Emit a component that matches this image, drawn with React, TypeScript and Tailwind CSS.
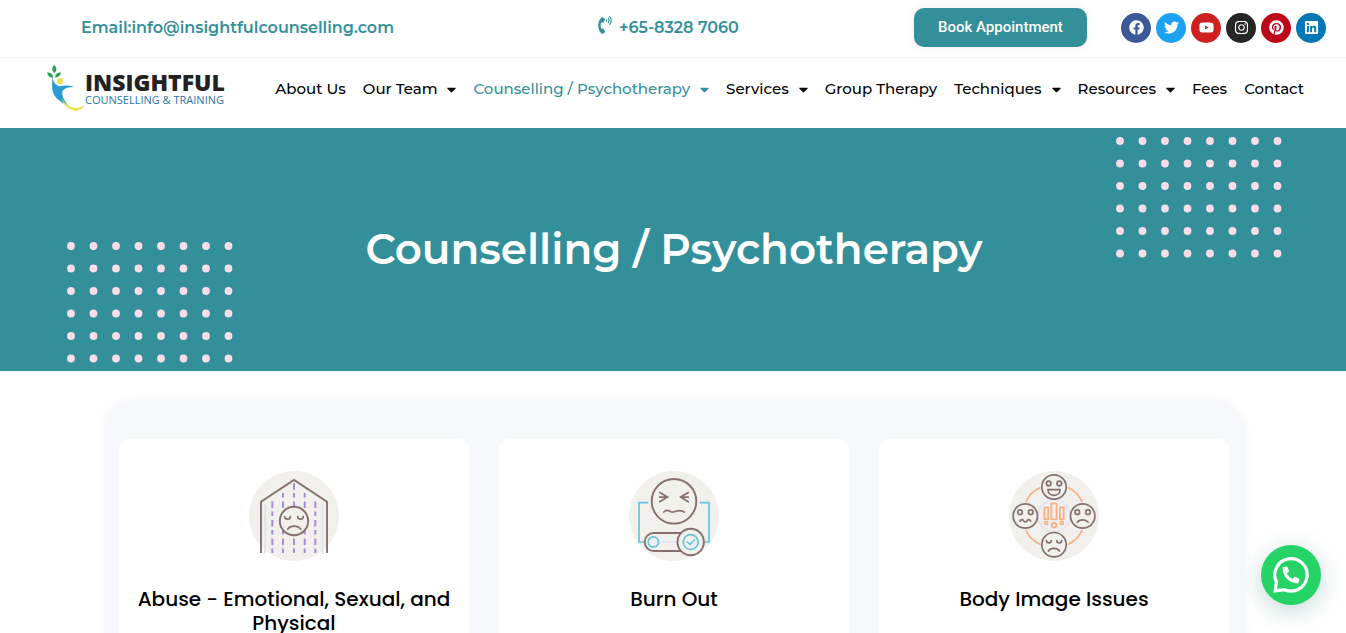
import type { ReactNode } from 'react';
import {
  FaCaretDown,
  FaFacebook,
  FaInstagram,
  FaLinkedin,
  FaPhoneVolume,
  FaPinterest,
  FaTwitter,
  FaYoutube,
} from 'react-icons/fa';

const navItems = [
  { label: 'About Us' },
  { label: 'Our Team', menu: true },
  { label: 'Counselling / Psychotherapy', menu: true, active: true },
  { label: 'Services', menu: true },
  { label: 'Group Therapy' },
  { label: 'Techniques', menu: true },
  { label: 'Resources', menu: true },
  { label: 'Fees' },
  { label: 'Contact' },
];

const socials = [
  { name: 'Facebook', icon: FaFacebook, color: 'bg-[#3b5998]' },
  { name: 'Twitter', icon: FaTwitter, color: 'bg-[#1da1f2]' },
  { name: 'YouTube', icon: FaYoutube, color: 'bg-[#cd201f]' },
  { name: 'Instagram', icon: FaInstagram, color: 'bg-[#262626]' },
  { name: 'Pinterest', icon: FaPinterest, color: 'bg-[#bd081c]' },
  { name: 'LinkedIn', icon: FaLinkedin, color: 'bg-[#0077b5]' },
];

function LogoMark() {
  return (
    <svg width="38" height="46" viewBox="0 0 38 46" aria-hidden="true">
      <path d="M7.2 0C10 2.6 10.2 5.4 7.4 8 4.4 5.4 4.6 2.6 7.2 0z" fill="#2f9e5b" />
      <path d="M0 7.4c3.8-.2 6 1.6 6.4 5.4C2.8 12.6.6 11 0 7.4z" fill="#2f9e5b" />
      <path d="M14 7.4c-3.6-.2-5.8 1.6-6.2 5.2 3.4 0 5.6-1.8 6.2-5.2z" fill="#2f9e5b" />
      <path
        d="M5.4 11.600c.9 6 3.200 8.800 7.200 9.600 4.600-.9 9.200-1.100 14.400.5-5.400.4-9.200 1.200-11.400 4-1.300 4.500 1.400 9.500 6 15.400C13.200 37.400 6.600 31.900 5.500 25.300c-.6-4.500-.4-9 0-13.700z"
        fill="#2a9bd6"
      />
      <path
        d="M15 33.600c3 5.400 6.800 8.600 12.200 9.200 4 .3 7-.4 10-2.200-1.600 3.200-5.400 5.400-9.600 5-6.400-.8-11.400-5.200-12.600-12z"
        fill="#e9e24f"
      />
      <circle cx="13.2" cy="16" r="3.1" fill="#e9e24f" />
    </svg>
  );
}

function Dots() {
  return (
    <svg width="166" height="121" viewBox="0 0 166 121" fill="#fbdcea" aria-hidden="true">
      {Array.from({ length: 48 }, (_, i) => (
        <circle key={i} cx={4 + (i % 8) * 22.5} cy={4 + Math.floor(i / 8) * 22.5} r="3.9" />
      ))}
    </svg>
  );
}

function IconDisc({ children }: { children: ReactNode }) {
  return (
    <svg
      width="90"
      height="90"
      viewBox="0 0 90 90"
      fill="none"
      stroke="#85706f"
      strokeWidth="1.7"
      strokeLinecap="round"
      aria-hidden="true"
    >
      <circle cx="45" cy="45" r="45" fill="#f1f0ed" stroke="none" />
      {children}
    </svg>
  );
}

function AbuseIcon() {
  return (
    <IconDisc>
      <path d="M16 33v49M73.7 33v49" stroke="#e6e1ef" />
      <g stroke="#a98bd0" strokeLinecap="butt" strokeWidth="2" strokeDasharray="4.5 3.5 6.5 4">
        <path d="M23.3 82V27M34 82V20M45 82V12M55.7 82V20M66.3 82V27" />
      </g>
      <path d="M12 82V30.7L45 9l33 21.7V82" strokeLinecap="butt" strokeWidth="1.9" />
      <circle cx="45" cy="50" r="14.2" fill="#f1f0ed" strokeWidth="1.9" />
      <path d="M35.7 45.5c0 3.6 5.6 3.6 5.6 0M48.7 45.5c0 3.6 5.6 3.6 5.6 0M38.7 58.2c2.6-4 10.4-4 13 0" />
    </IconDisc>
  );
}

function BurnOutIcon() {
  return (
    <IconDisc>
      <path d="M19.3 31.7H10V71h5.3M70.7 31.7H80V71h-4.7" stroke="#64c4da" strokeLinecap="butt" />
      <circle cx="45" cy="30.3" r="22.3" strokeWidth="1.9" />
      <path d="M30.7 21.5l7.8 4.6-7.8 4.7M30.7 26.1h7.8M59.3 21.5l-7.8 4.6 7.8 4.7M59.3 26.1h-7.8" />
      <path d="M34.7 41c3-3 5-1.400 7-.2 2 1 3.400 0 5-.6 2.600-1 4.600-1.200 8.600.8" />
      <rect x="15.7" y="62" width="58" height="18" rx="9" strokeWidth="1.9" />
      <path d="M32 71h15" stroke="#e6e1ef" />
      <circle cx="24.3" cy="71" r="5.2" stroke="#64c4da" />
      <circle cx="61.7" cy="71" r="13.2" fill="#f1f0ed" strokeWidth="1.9" />
      <circle cx="61.7" cy="71" r="7.4" stroke="#64c4da" />
      <path d="M58.5 71l2.6 2.6 4.2-4.6" stroke="#64c4da" />
    </IconDisc>
  );
}

function BodyImageIcon() {
  return (
    <IconDisc>
      <circle cx="45" cy="45" r="16" stroke="#e6e1ef" />
      <g stroke="#f7ae83">
        <path d="M17 30.3c3-6 8-11 13.7-13.6M59.3 16.7C65 19.3 70 24.3 73 30.3M17 59.7c3 6 8 11 13.7 13.6M59.3 73.3C65 70.7 70 65.7 73 59.7" />
        <rect x="42.4" y="32.5" width="5.2" height="15.8" />
        <rect x="35.4" y="36.5" width="3.8" height="11.8" />
        <rect x="50.9" y="36.5" width="3.8" height="11.8" />
        <circle cx="45" cy="54.3" r="2.4" />
        <circle cx="37.2" cy="52" r="1.5" />
        <circle cx="52.8" cy="52" r="1.5" />
      </g>
      <circle cx="45" cy="16" r="12.2" />
      <circle cx="39.7" cy="12.5" r="2.3" />
      <circle cx="50.3" cy="12.5" r="2.3" />
      <path d="M39 18.7h12c0 7.6-12 7.6-12 0z" />
      <circle cx="16.3" cy="45" r="12.2" />
      <circle cx="11" cy="41.2" r="2.3" />
      <circle cx="21.7" cy="41.2" r="2.3" />
      <path d="M11 50.3c1.2-2.2 2.4-2.2 3.600-.6 1.200 1.600 2.300 1.600 3.500 0 1.200-1.600 2.400-1.600 3.600.6" />
      <circle cx="73.7" cy="45" r="12.2" />
      <circle cx="68.3" cy="41.2" r="2.3" />
      <circle cx="79" cy="41.2" r="2.3" />
      <path d="M68.3 51.2c2.2-3 8.6-3 10.8 0" />
      <circle cx="45" cy="73.7" r="12.2" />
      <path d="M37.4 69.5c0 3.2 4.8 3.2 4.8 0M47.8 69.5c0 3.2 4.8 3.2 4.8 0M39.5 80c2.2-3.4 8.8-3.4 11 0" />
    </IconDisc>
  );
}

const topics = [
  { title: 'Abuse - Emotional, Sexual, and Physical', icon: <AbuseIcon /> },
  { title: 'Burn Out', icon: <BurnOutIcon /> },
  { title: 'Body Image Issues', icon: <BodyImageIcon /> },
];

function TopBar() {
  return (
    <div className="grid grid-cols-[517fr_316fr_207fr_auto] items-center border-b border-[#f5f5f5] pt-2 pr-5 pb-[10px] pl-[81px]">
      <a href="mailto:info@insightfulcounselling.com" className="text-base font-semibold text-[#33909a]">
        Email:info@insightfulcounselling.com
      </a>
      <a href="tel:+6583287060" className="flex items-center gap-[7px] text-base font-semibold text-[#33909a]">
        <FaPhoneVolume className="mb-[6px] h-[18px] w-[14px]" />
        +65-8328 7060
      </a>
      <div>
        <button className="rounded-[10px] bg-[#33909a] px-6 py-2 font-['Roboto',sans-serif] text-[15px] leading-[23px] font-medium text-white shadow-[0_0_10px_rgba(0,0,0,0.08)]">
          Book Appointment
        </button>
      </div>
      <div className="flex gap-[5px]">
        {socials.map(({ name, icon: Icon, color }) => (
          <a key={name} href="#" aria-label={name} className={`flex size-[30px] items-center justify-center rounded-full text-white ${color}`}>
            <Icon className="size-[15px]" />
          </a>
        ))}
      </div>
    </div>
  );
}

function Header() {
  return (
    <header className="flex h-[70px] items-center justify-between pr-[42px] pb-[10px] pl-[47px]">
      <a href="#" className="flex items-center">
        <LogoMark />
        <span className="flex flex-col whitespace-nowrap">
          <span className="font-['Open_Sans',sans-serif] text-[23px] leading-6 font-extrabold text-[#222]">INSIGHTFUL</span>
          <span className="font-['Open_Sans',sans-serif] text-[11px] leading-3 text-[#2478a8]">COUNSELLING &amp; TRAINING</span>
        </span>
      </a>
      <nav className="flex items-center gap-[17px] pt-[2px]">
        {navItems.map((item) => (
          <a
            key={item.label}
            href="#"
            className={`flex items-center gap-[10px] text-[15px] leading-5 font-medium whitespace-nowrap ${item.active ? 'text-[#33909a]' : 'text-black'}`}
          >
            {item.label}
            {item.menu && <FaCaretDown className="h-[15px] w-[9px]" />}
          </a>
        ))}
      </nav>
    </header>
  );
}

export default function App() {
  return (
    <div className="bg-white font-['Montserrat',sans-serif]">
      <TopBar />
      <Header />

      <section className="relative flex h-[243px] items-center justify-center bg-[#33909a] pb-[2px] pl-[2px]">
        <h1 className="text-[42px] leading-[52px] font-semibold text-white">Counselling / Psychotherapy</h1>
        <div className="absolute bottom-2 left-[5%]">
          <Dots />
        </div>
        <div className="absolute top-[9px] right-16">
          <Dots />
        </div>
      </section>

      <main className="pt-[30px] pl-[2px]">
        <div className="mx-auto grid max-w-[1140px] grid-cols-3 gap-[30px] rounded-[30px] bg-[#f7f8fc] px-[15px] pt-[38px] pb-10 shadow-[0_0_10px_rgba(0,0,0,0.06)]">
          {topics.map((topic) => (
            <article key={topic.title} className="flex flex-col items-center rounded-[10px] bg-white px-3 pt-8 pb-12">
              {topic.icon}
              <h2 className="mt-[26px] text-center font-['Poppins',sans-serif] text-xl leading-6 font-medium text-black">
                {topic.title}
              </h2>
            </article>
          ))}
        </div>
      </main>

      <button
        aria-label="Chat on WhatsApp"
        className="fixed right-[25px] bottom-7 flex size-[60px] items-center justify-center rounded-full bg-[#25d366] shadow-[0_6px_24px_rgba(7,94,84,0.24)]"
      >
        <svg width="36" height="36" viewBox="0 0 36 36" aria-hidden="true">
          <path d="M2.2 33.8L3.4 25A16.2 16.2 0 1 1 11.4 32.7z" fill="none" stroke="#fff" strokeWidth="3.2" />
          <path
            transform="translate(9.5 9.5) scale(.033)"
            d="M497.4 361.8l-112-48a24 24 0 0 0-28 6.9l-49.6 60.6A370.7 370.7 0 0 1 130.6 204.1l60.6-49.6a24 24 0 0 0 6.9-28l-48-112A24.2 24.2 0 0 0 122.6.6l-104 24A24 24 0 0 0 0 48c0 256.5 207.9 464 464 464a24 24 0 0 0 23.4-18.6l24-104a24.3 24.3 0 0 0-14-27.6z"
            fill="#fff"
          />
        </svg>
      </button>
    </div>
  );
}
